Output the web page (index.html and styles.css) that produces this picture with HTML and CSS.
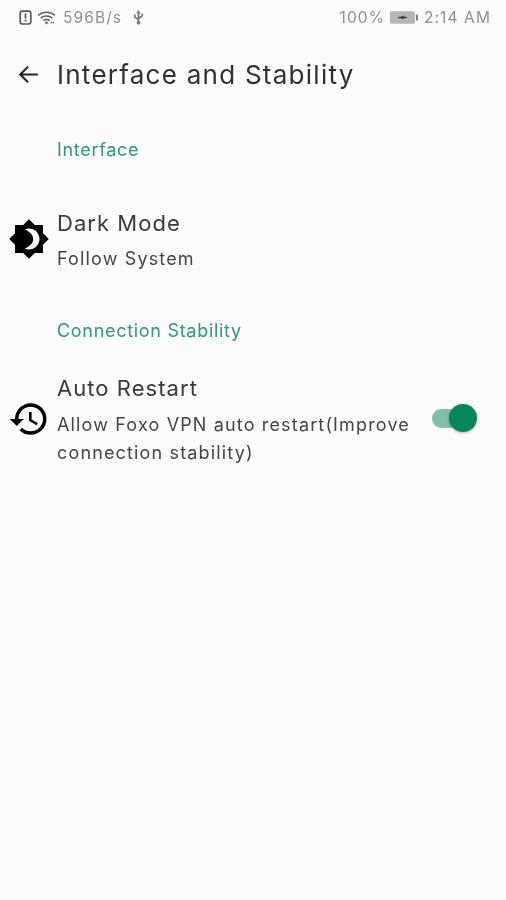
FILE: index.html
```html
<!DOCTYPE html>
<html lang="en">
<head>
<meta charset="utf-8">
<title>Interface and Stability</title>
<link rel="stylesheet" href="styles.css">
</head>
<body>
<div class="screen">
  <div class="status">
    <div class="status-group">
      <svg class="ic-alert" viewBox="0 0 12 14"><rect x="1" y="1" width="10" height="12" rx="2" fill="none" stroke="#555" stroke-width="1.5"/><rect x="5.2" y="3.2" width="1.6" height="4.8" fill="#555"/><rect x="5.2" y="9" width="1.6" height="1.8" fill="#555"/></svg>
      <svg class="ic-wifi" viewBox="0 0 18 14"><path d="M1 5c4.500-4 11.500-4 16 0M3.500 7.500c3-2.600 8-2.600 11 0M6 10c1.600-1.300 4.400-1.300 6 0" fill="none" stroke="#666" stroke-width="1.500"/><circle cx="9" cy="12" r="1.300" fill="#666"/><path d="M13 12h4" stroke="#666" stroke-width="1.600" stroke-dasharray="1.200 .8"/></svg>
      <span class="speed">596B/s</span>
      <svg class="ic-usb" viewBox="0 0 10 14"><path d="M5 13V1M1.500 4v2.500L5 9M8.500 3.500v2L5 8" fill="none" stroke="#777" stroke-width="1.600"/><path d="M3 3.200 5 .3l2 2.900z" fill="#777"/><circle cx="5" cy="12" r="1.700" fill="#777"/></svg>
    </div>
    <div class="status-group status-right">
      <span>100%</span>
      <svg class="ic-battery" viewBox="0 0 27 14"><rect x="0" y="1" width="24" height="12" rx="1.500" fill="#b5b5b5"/><rect x="25" y="4" width="2" height="6" rx="1" fill="#777"/><path d="M8 7h8" stroke="#333" stroke-width="1.400"/><path d="M10 7l3-2v4z" fill="#333"/></svg>
      <span>2:14 AM</span>
    </div>
  </div>

  <header class="toolbar">
    <svg class="ic-back" viewBox="0 0 24 24"><path d="M21 12H4M11.500 4.500 4 12l7.500 7.500"/></svg>
    <h1 class="title">Interface and Stability</h1>
  </header>

  <section class="group group-interface">
    <h2 class="group-title">Interface</h2>
    <div class="row row-dark">
      <svg class="row-icon" viewBox="0 0 24 24"><path d="M20 8.690V4h-4.690L12 .69 8.690 4H4v4.690L.69 12 4 15.310V20h4.690L12 23.310 15.310 20H20v-4.690L23.310 12 20 8.690zM12 18c-.89 0-1.740-.2-2.500-.55C12.500 16.200 14.400 14.300 14.400 12s-1.900-4.200-4.900-5.450C10.260 6.200 11.110 6 12 6c3.310 0 6 2.690 6 6s-2.690 6-6 6z"/></svg>
      <div class="row-text">
        <div class="row-title">Dark Mode</div>
        <div class="row-sub">Follow System</div>
      </div>
    </div>
  </section>

  <section class="group group-stability">
    <h2 class="group-title">Connection Stability</h2>
    <div class="row row-restart">
      <svg class="row-icon" viewBox="0 0 24 24"><path d="M13 3c-4.970 0-9 4.030-9 9H1l3.890 3.890.07.14L9 12H6c0-3.870 3.130-7 7-7s7 3.130 7 7-3.130 7-7 7c-1.930 0-3.680-.79-4.940-2.060l-1.420 1.420C8.270 19.990 10.510 21 13 21c4.970 0 9-4.030 9-9s-4.030-9-9-9zm-1 5v5l4.280 2.540.72-1.210-3.500-2.080V8H12z"/></svg>
      <div class="row-text">
        <div class="row-title">Auto Restart</div>
        <div class="row-sub">Allow Foxo VPN auto restart(Improve connection stability)</div>
      </div>
      <div class="switch"><span class="switch-thumb"></span></div>
    </div>
  </section>
</div>
</body>
</html>
```
FILE: styles.css
```css
* { box-sizing: border-box; }
html, body { margin: 0; padding: 0; }
body {
  background: #fcfcfc;
  font-family: "Inter", "Liberation Sans", sans-serif;
  color: #333;
}
.screen {
  width: 506px;
  height: 900px;
  overflow: hidden;
  filter: blur(0.45px);
}
.status {
  height: 35px;
  padding: 0 15px 0 19px;
  display: flex;
  justify-content: space-between;
  align-items: center;
  font-size: 15.5px;
  letter-spacing: 1.1px;
  color: #8f8f8f;
}
.status-group { display: flex; align-items: center; }
.ic-alert { width: 13px; height: 15px; }
.ic-wifi { width: 19px; height: 15px; margin-left: 5px; }
.speed { margin-left: 7px; }
.ic-usb { width: 11px; height: 15px; margin-left: 11px; }
.ic-battery { width: 28px; height: 15px; margin: 0 6px 0 5px; }
.toolbar {
  display: flex;
  align-items: center;
  height: 50px;
  margin-top: 14px;
}
.ic-back {
  width: 25px;
  height: 25px;
  margin-left: 16px;
  fill: none;
  stroke: #222;
  stroke-width: 1.9;
  flex: none;
}
.title {
  margin: 0 0 0 16px;
  font-size: 26px;
  font-weight: 400;
  letter-spacing: 1.26px;
  color: #303030;
}
.group-title {
  margin: 0 0 0 57px;
  font-size: 18px;
  font-weight: 400;
  line-height: 24px;
  letter-spacing: 0.7px;
  color: #2f9a73;
}
.group-interface { padding-top: 39px; }
.group-stability { padding-top: 46px; }
.row { display: flex; align-items: center; padding-left: 8px; }
.row-dark { margin-top: 47px; }
.row-restart { margin-top: 31px; }
.row-icon { width: 42px; height: 42px; flex: none; fill: #000; margin-top: -4px; }
.row-text { margin-left: 7px; width: 368px; flex: none; }
.row-title {
  font-size: 22px;
  line-height: 28px;
  letter-spacing: 1.05px;
  color: #3a3a3a;
}
.row-sub {
  margin-top: 9px;
  font-size: 18px;
  line-height: 28px;
  letter-spacing: 1.15px;
  color: #444;
}
.row-dark .row-sub { margin-top: 8px; }
.switch {
  position: relative;
  width: 28px;
  height: 19px;
  margin-left: 7px;
  margin-top: -4px;
  border-radius: 10px;
  background: #7fbfa6;
  flex: none;
}
.switch-thumb {
  position: absolute;
  right: -17px;
  top: -5px;
  width: 28px;
  height: 28px;
  border-radius: 50%;
  background: #07855c;
  box-shadow: 0 1px 3px rgba(0,0,0,.3);
}
```
